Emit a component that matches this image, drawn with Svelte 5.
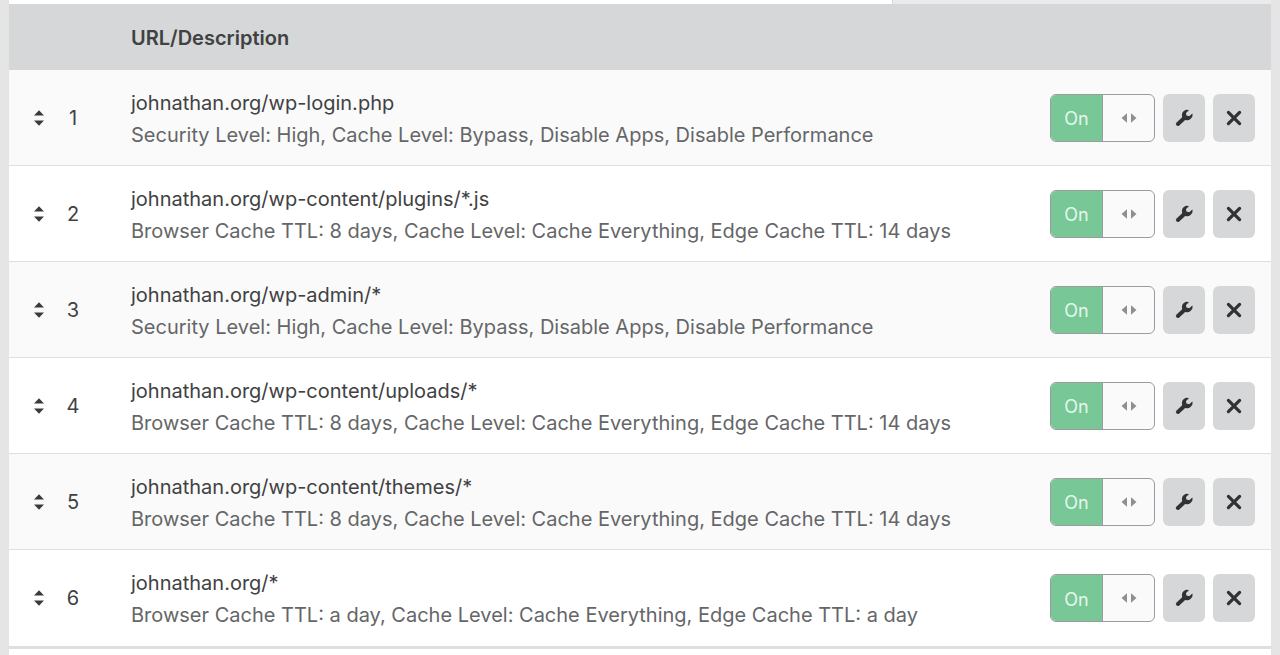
<script>
  let rules = $state([
    {
      id: 1,
      url: "johnathan.org/wp-login.php",
      desc: "Security Level: High, Cache Level: Bypass, Disable Apps, Disable Performance",
      on: true,
    },
    {
      id: 2,
      url: "johnathan.org/wp-content/plugins/*.js",
      desc: "Browser Cache TTL: 8 days, Cache Level: Cache Everything, Edge Cache TTL: 14 days",
      on: true,
    },
    {
      id: 3,
      url: "johnathan.org/wp-admin/*",
      desc: "Security Level: High, Cache Level: Bypass, Disable Apps, Disable Performance",
      on: true,
    },
    {
      id: 4,
      url: "johnathan.org/wp-content/uploads/*",
      desc: "Browser Cache TTL: 8 days, Cache Level: Cache Everything, Edge Cache TTL: 14 days",
      on: true,
    },
    {
      id: 5,
      url: "johnathan.org/wp-content/themes/*",
      desc: "Browser Cache TTL: 8 days, Cache Level: Cache Everything, Edge Cache TTL: 14 days",
      on: true,
    },
    {
      id: 6,
      url: "johnathan.org/*",
      desc: "Browser Cache TTL: a day, Cache Level: Cache Everything, Edge Cache TTL: a day",
      on: true,
    },
  ]);

  function removeRule(id) {
    rules = rules.filter((rule) => rule.id !== id);
  }

  function moveUp(index) {
    if (index === 0) return;
    const moved = rules[index];
    rules[index] = rules[index - 1];
    rules[index - 1] = moved;
  }
</script>

<main class="panel">
  <div class="strip">
    <div class="strip-open"></div>
    <div class="strip-rest"></div>
  </div>

  <table>
    <thead>
      <tr>
        <th class="order"></th>
        <th>URL/Description</th>
        <th class="actions"></th>
      </tr>
    </thead>
    <tbody>
      {#each rules as rule, i (rule.id)}
        <tr>
          <td class="order">
            <div class="order-row">
              <button class="handle" aria-label="Move rule up" onclick={() => moveUp(i)}>
                <svg width="12" height="16" viewBox="0 0 12 16">
                  <path d="M6 0.3 11 5.6H1zM6 15.7 1 10.4h10z" fill="#3a3a3b" />
                </svg>
              </button>
              <span class="number">{i + 1}</span>
            </div>
          </td>
          <td class="rule">
            <div class="url">{rule.url}</div>
            <div class="desc">{rule.desc}</div>
          </td>
          <td class="actions">
            <div class="actions-row">
              <label class="toggle" class:off={!rule.on}>
                <input type="checkbox" bind:checked={rule.on} />
                <span class="state">{rule.on ? "On" : "Off"}</span>
                <span class="knob">
                  <svg width="16" height="10" viewBox="0 0 16 10">
                    <path d="M6 0.3v9.4L0.5 5zM10 0.3v9.4L15.5 5z" fill="#8e8f91" />
                  </svg>
                </span>
              </label>
              <button class="tool" aria-label="Edit rule">
                <svg width="18" height="18" viewBox="0 0 18 18">
                  <path d="M2.9 15 9.6 8.8" stroke="#303133" stroke-width="4" stroke-linecap="round" />
                  <path
                    d="M14 1.2A5.2 5.2 0 0 0 6.9 6.2a5.2 5.2 0 0 0 8.6 3.8 5.2 5.2 0 0 0 1.8-5.6L14.2 7.2 11.4 6.6 11 4z"
                    fill="#303133"
                  />
                </svg>
              </button>
              <button class="tool" aria-label="Delete rule" onclick={() => removeRule(rule.id)}>
                <svg width="18" height="18" viewBox="0 0 18 18">
                  <path d="M3.4 3.4 14.6 14.6M14.6 3.4 3.4 14.6" stroke="#303133" stroke-width="3.2" stroke-linecap="round" />
                </svg>
              </button>
            </div>
          </td>
        </tr>
      {/each}
    </tbody>
  </table>
</main>

<style>
  :global(body) {
    margin: 0;
    background: #e5e5e6;
  }

  .panel {
    box-sizing: border-box;
    min-height: 100vh;
    margin: 0 9px;
    background: #fff;
    font-family: Inter, "Liberation Sans", sans-serif;
    font-size: 20px;
    color: #404142;
  }

  .strip {
    display: flex;
    height: 4px;
  }

  .strip-open {
    flex: 7;
  }

  .strip-rest {
    flex: 3;
    background: #ebebec;
    border-left: 1px solid #d9d9da;
  }

  table {
    width: 100%;
    border-collapse: separate;
    border-spacing: 0;
  }

  th {
    box-sizing: border-box;
    height: 66px;
    padding: 2px 0 0;
    background: #d5d7d8;
    text-align: left;
    font-weight: 600;
  }

  td {
    box-sizing: border-box;
    height: 96px;
    padding: 0;
    border-bottom: 1px solid #dedfe0;
  }

  tbody tr:nth-child(odd) {
    background: #fafafa;
  }

  tbody tr:last-child td {
    height: 99px;
    border-bottom: 3px solid #dedfe0;
  }

  .order {
    width: 122px;
  }

  .order-row {
    display: flex;
    align-items: center;
    gap: 20px;
    padding-left: 24px;
  }

  .number {
    width: 16px;
    text-align: center;
  }

  .actions {
    width: 222px;
  }

  .actions-row {
    display: flex;
    align-items: center;
    justify-content: flex-end;
    gap: 8px;
    padding-right: 16px;
  }

  .rule {
    padding-top: 2px;
  }

  .url,
  .desc {
    line-height: 32px;
    white-space: nowrap;
  }

  .desc {
    color: #656668;
  }

  button {
    display: flex;
    align-items: center;
    justify-content: center;
    padding: 0;
    border: 0;
    background: none;
    cursor: pointer;
  }

  .handle {
    width: 12px;
    height: 32px;
    cursor: move;
  }

  .tool {
    width: 42px;
    height: 48px;
    border-radius: 6px;
    background: #d5d7d8;
  }

  .toggle {
    box-sizing: border-box;
    display: flex;
    width: 105px;
    height: 48px;
    border: 1px solid #9b9c9e;
    border-radius: 6px;
    overflow: hidden;
    background: #fafafa;
    cursor: pointer;
  }

  .toggle input {
    appearance: none;
    width: 0;
    margin: 0;
  }

  .toggle:focus-within {
    box-shadow: 0 0 0 2px #a9d8bd;
  }

  .state,
  .knob {
    display: flex;
    flex: 1;
    align-items: center;
    justify-content: center;
  }

  .state {
    padding-top: 2px;
    background: #77c797;
    color: #e6f7ec;
    font-size: 18px;
    border-right: 1px solid #9b9c9e;
  }

  .off .state {
    background: #b5b7b9;
  }
</style>
